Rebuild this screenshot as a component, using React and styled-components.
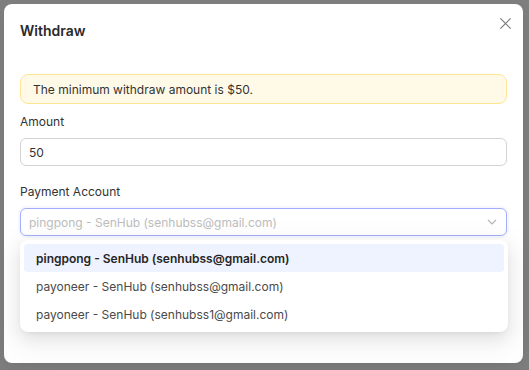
import React, { useState } from 'react';
import styled, { createGlobalStyle } from 'styled-components';

const GlobalStyle = createGlobalStyle`
  html, body {
    margin: 0;
    padding: 0;
    background: #7f7f7f;
    font-family: Inter, "Noto Sans", sans-serif;
  }
  * { box-sizing: border-box; }
`;

const Backdrop = styled.div`
  width: 529px;
  height: 370px;
  padding: 4px 6px 7px 4px;
  background: #7f7f7f;
`;

const Modal = styled.div`
  position: relative;
  height: 100%;
  background: #fff;
  border-radius: 8px;
  padding: 16px 16px 0 16px;
  box-shadow: 0 6px 16px rgba(0, 0, 0, 0.08);
`;

const Title = styled.h3`
  margin: 0;
  font-size: 14px;
  font-weight: 600;
  line-height: 22px;
  color: #2a2a2a;
`;

const Close = styled.button`
  position: absolute;
  top: 8px;
  right: 7px;
  width: 22px;
  height: 22px;
  padding: 0;
  border: 0;
  background: none;
  color: #7a7a7a;
  display: flex;
  align-items: center;
  justify-content: center;
  cursor: pointer;
`;

const Body = styled.div`
  margin-top: 32px;
  display: flex;
  flex-direction: column;
`;

const Alert = styled.div`
  height: 30px;
  display: flex;
  align-items: center;
  padding: 0 12px;
  background: #fffae8;
  border: 1px solid #ffe58f;
  border-radius: 8px;
  font-size: 12px;
  color: #333;
`;

const Label = styled.label`
  display: block;
  font-size: 12px;
  color: #333;
  line-height: 20px;
  margin: ${p => p.$top}px 0 6px;
`;

const Input = styled.div`
  height: 28px;
  border: 1px solid ${p => (p.$focus ? '#a3aefc' : '#d4d4d4')};
  border-radius: 6px;
  display: flex;
  align-items: center;
  justify-content: space-between;
  padding: 0 8px 0 8px;
  font-size: 12px;
  color: ${p => (p.$placeholder ? '#bdbdbd' : '#333')};
  box-shadow: ${p => (p.$focus ? '0 0 0 2px rgba(99, 115, 255, 0.06)' : 'none')};
`;

const Menu = styled.div`
  position: absolute;
  left: 16px;
  right: 15px;
  top: 236px;
  background: #fff;
  border-radius: 8px;
  padding: 4px;
  box-shadow: 0 6px 16px rgba(0, 0, 0, 0.08), 0 3px 6px -4px rgba(0, 0, 0, 0.12),
    0 9px 28px 8px rgba(0, 0, 0, 0.05);
`;

const Option = styled.div`
  height: 28px;
  display: flex;
  align-items: center;
  padding: 0 12px;
  border-radius: 4px;
  font-size: 12px;
  color: ${p => (p.$active ? '#262626' : '#4a4a4a')};
  font-weight: ${p => (p.$active ? 600 : 400)};
  background: ${p => (p.$active ? '#eef3ff' : 'transparent')};
`;

const options = [
  'pingpong - SenHub (senhubss@gmail.com)',
  'payoneer - SenHub (senhubss@gmail.com)',
  'payoneer - SenHub (senhubss1@gmail.com)',
];

export default function App() {
  const [selected] = useState(0);
  return (
    <Backdrop>
      <GlobalStyle />
      <Modal>
        <Title>Withdraw</Title>
        <Close aria-label="close">
          <svg width="13" height="13" viewBox="0 0 14 14" fill="none" stroke="currentColor" strokeWidth="1.3">
            <path d="M1.5 1.5 L12.5 12.5 M12.5 1.5 L1.5 12.5" />
          </svg>
        </Close>
        <Body>
          <Alert>The minimum withdraw amount is $50.</Alert>
          <Label $top={8}>Amount</Label>
          <Input>50</Input>
          <Label $top={16}>Payment Account</Label>
          <Input $focus $placeholder>
            pingpong - SenHub (senhubss@gmail.com)
            <svg width="12" height="12" viewBox="0 0 12 12" fill="none" stroke="#b5b5b5" strokeWidth="1.2">
              <path d="M2 4 L6 8 L10 4" />
            </svg>
          </Input>
        </Body>
        <Menu>
          {options.map((o, i) => (
            <Option key={o} $active={i === selected}>{o}</Option>
          ))}
        </Menu>
      </Modal>
    </Backdrop>
  );
}
